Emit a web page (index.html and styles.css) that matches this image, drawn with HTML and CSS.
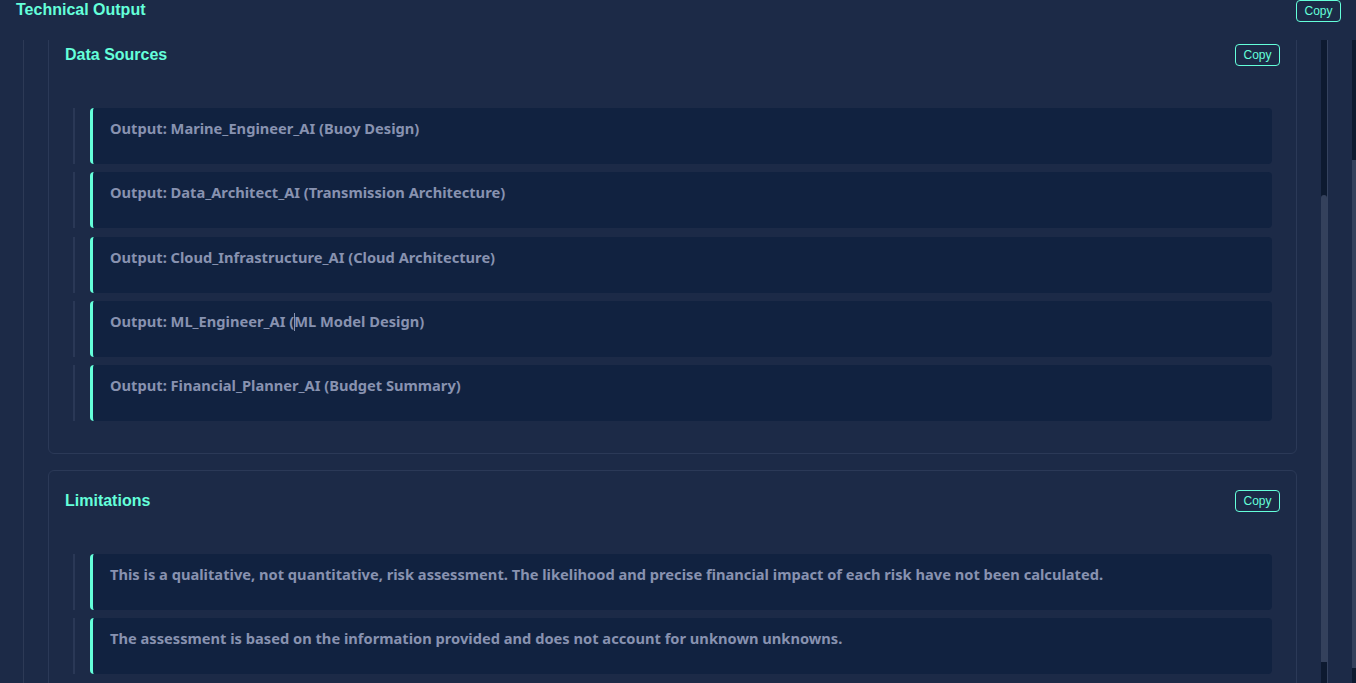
FILE: index.html
```html
<!DOCTYPE html>
<html lang="en">
<head>
<meta charset="utf-8">
<title>Technical Output</title>
<link rel="stylesheet" href="styles.css">
</head>
<body>
<header class="top">
  <h1 class="title">Technical Output</h1>
  <button class="copy">Copy</button>
</header>
<div class="main">
  <div class="panel">
    <div class="panel-inner">
      <section class="card first">
        <div class="card-head">
          <h2 class="card-title">Data Sources</h2>
          <button class="copy">Copy</button>
        </div>
        <div class="items">
          <div class="row"><div class="item"><p>Output: Marine_Engineer_AI (Buoy Design)</p></div></div>
          <div class="row"><div class="item"><p>Output: Data_Architect_AI (Transmission Architecture)</p></div></div>
          <div class="row"><div class="item"><p>Output: Cloud_Infrastructure_AI (Cloud Architecture)</p></div></div>
          <div class="row"><div class="item"><p>Output: ML_Engineer_AI (<span class="caret"></span>ML Model Design)</p></div></div>
          <div class="row"><div class="item"><p>Output: Financial_Planner_AI (Budget Summary)</p></div></div>
        </div>
      </section>
      <section class="card">
        <div class="card-head">
          <h2 class="card-title">Limitations</h2>
          <button class="copy">Copy</button>
        </div>
        <div class="items">
          <div class="row"><div class="item"><p>This is a qualitative, not quantitative, risk assessment. The likelihood and precise financial impact of each risk have not been calculated.</p></div></div>
          <div class="row"><div class="item"><p>The assessment is based on the information provided and does not account for unknown unknowns.</p></div></div>
        </div>
      </section>
    </div>
  </div>
  <div class="scroll inner-scroll"><div class="thumb"></div></div>
  <div class="scroll outer-scroll"><div class="thumb"></div></div>
</div>
</body>
</html>
```
FILE: styles.css
```css
* { box-sizing: border-box; }
html, body { margin: 0; padding: 0; }
body {
  background: #1c2a47;
  width: 1356px;
  height: 683px;
  overflow: hidden;
  font-family: "Liberation Sans", Arial, sans-serif;
}
.top {
  height: 40px;
  display: flex;
  justify-content: space-between;
  align-items: flex-start;
  padding: 0 15px 0 16px;
}
.title {
  margin: 0;
  font-size: 16px;
  line-height: 20px;
  font-weight: 700;
  color: #64ffda;
}
.copy {
  font-family: "Liberation Sans", Arial, sans-serif;
  font-size: 12px;
  line-height: 14px;
  height: 22px;
  width: 45px;
  padding: 0;
  color: #64ffda;
  background: transparent;
  border: 1px solid #64ffda;
  border-radius: 4px;
}
.main {
  display: flex;
  height: 643px;
}
.panel {
  flex: 1;
  margin-left: 23px;
  border-left: 1px solid #2d3a56;
  padding: 0 24px;
  overflow: hidden;
}
.panel-inner {
  margin-top: -16px;
}
.card {
  border: 1px solid #2b3957;
  border-radius: 6px;
  padding: 19px 16px 32px 16px;
  margin-bottom: 16px;
}
.card-head {
  display: flex;
  justify-content: space-between;
  align-items: center;
  height: 22px;
  margin-bottom: 42px;
}
.card-title {
  margin: 0;
  font-size: 16px;
  font-weight: 700;
  color: #64ffda;
}
.items {
  padding: 0 8px 0 8px;
}
.row {
  border-left: 2px solid #2a3856;
  padding-left: 15px;
  margin-bottom: 8.25px;
}
.row:last-child { margin-bottom: 0; }
.item {
  height: 56px;
  background: #112240;
  border-left: 3px solid #64ffda;
  border-radius: 4px;
  padding: 10px 17px;
}
.item p {
  margin: 0;
  font-family: "Noto Sans", "Open Sans", sans-serif;
  font-weight: 700;
  font-size: 14.67px;
  line-height: 20px;
  color: #8892b0;
  white-space: nowrap;
}
.caret {
  display: inline-block;
  width: 1px;
  height: 18px;
  background: #8892b0;
  vertical-align: -4px;
  margin-right: -1px;
}
.scroll {
  display: flex;
  flex-direction: column;
  background: #0d1a30;
}
.inner-scroll {
  width: 7px;
  border-right: 1px solid #34425e;
}
.inner-scroll .thumb {
  margin-top: 155px;
  height: 467px;
  background: #34415c;
  border-radius: 3px 3px 0 0;
}
.outer-scroll {
  width: 4px;
  margin-left: 24px;
}
.outer-scroll .thumb {
  margin-top: 120px;
  height: 508px;
  background: #34415c;
}
```
